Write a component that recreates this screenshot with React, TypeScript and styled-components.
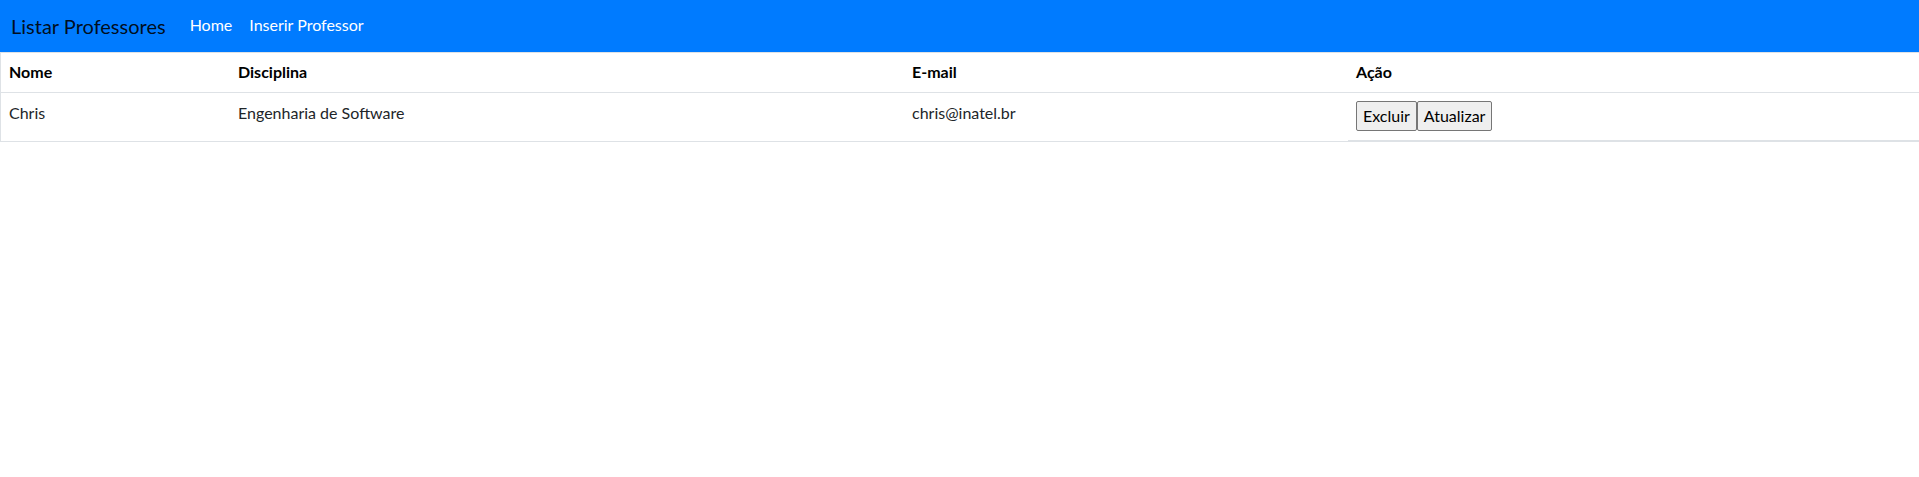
import React from "react";
import styled, { createGlobalStyle } from "styled-components";

const GlobalStyle = createGlobalStyle`
  html, body { margin: 0; padding: 0; background: #fff; }
  body {
    font-family: "Lato", "Open Sans", sans-serif;
    font-size: 16px;
    line-height: 1.5;
    color: #212529;
  }
`;

const Navbar = styled.nav`
  display: flex;
  align-items: center;
  height: 52px;
  padding: 0 11px;
  background: #007bff;
  box-sizing: border-box;
`;

const Brand = styled.span`
  font-size: 20px;
  line-height: 30px;
  color: rgba(0, 0, 0, 0.9);
  margin-right: 24px;
`;

const NavLinks = styled.div`
  display: flex;
  gap: 17px;
`;

const NavLink = styled.a`
  color: #fff;
  text-decoration: none;
  font-size: 16px;
  line-height: 24px;
  padding: 0 0 3px 0;
`;

const Table = styled.table`
  width: 100%;
  border-collapse: collapse;
  border-left: 1px solid #dee2e6;
  border-top: 1px solid #dee2e6;
  table-layout: fixed;
`;

const Th = styled.th<{ $w?: number }>`
  text-align: left;
  font-weight: 700;
  color: #000;
  padding: 7px 8px 8px;
  vertical-align: top;
  border-bottom: 1px solid #dee2e6;
  ${(p) => (p.$w ? `width: ${p.$w}px;` : "")}
`;

const Td = styled.td`
  padding: 8px;
  vertical-align: top;
  border-bottom: 1px solid #dee2e6;
  color: #212529;
`;

const ActionCell = styled(Td)`
  padding-bottom: 9px;
  border-bottom: 2px solid #dee2e6;
`;

const Button = styled.button`
  font-family: inherit;
  font-size: 16px;
  line-height: 22px;
  height: 30px;
  padding: 2px 6px;
  background: #efefef;
  color: #000;
  border: 1px solid #767676;
  border-radius: 2px;
  box-sizing: border-box;
  cursor: pointer;
`;

const professores = [
  { nome: "Chris", disciplina: "Engenharia de Software", email: "chris@inatel.br" },
];

export default function App() {
  return (
    <>
      <GlobalStyle />
      <Navbar>
        <Brand>Listar Professores</Brand>
        <NavLinks>
          <NavLink href="#">Home</NavLink>
          <NavLink href="#">Inserir Professor</NavLink>
        </NavLinks>
      </Navbar>
      <Table>
        <thead>
          <tr>
            <Th $w={213}>Nome</Th>
            <Th $w={658}>Disciplina</Th>
            <Th $w={428}>E-mail</Th>
            <Th>Ação</Th>
          </tr>
        </thead>
        <tbody>
          {professores.map((p) => (
            <tr key={p.email}>
              <Td>{p.nome}</Td>
              <Td>{p.disciplina}</Td>
              <Td>{p.email}</Td>
              <ActionCell>
                <Button>Excluir</Button>
                <Button>Atualizar</Button>
              </ActionCell>
            </tr>
          ))}
        </tbody>
      </Table>
    </>
  );
}
